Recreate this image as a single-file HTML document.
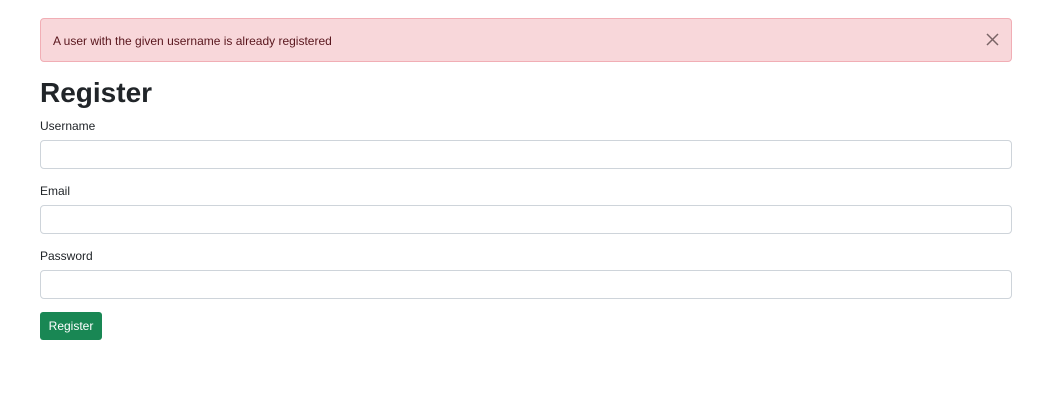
<!DOCTYPE html>
<html><head><meta charset="utf-8"><style>
body{margin:0;width:1045px;height:414px;background:#fff;font-family:"Liberation Sans",sans-serif;position:relative;color:#212529}
.alert{position:absolute;left:40px;top:18px;width:970px;height:42px;background:#f8d7da;border:1px solid #f1aeb5;border-radius:4px;box-sizing:content-box}
.alert span{position:absolute;left:12px;top:15px;font-size:12px;color:#58151c}
.x{position:absolute;right:12px;top:14px}
h1{position:absolute;left:40px;top:77px;margin:0;font-size:28px;font-weight:bold;color:#212529}
label{position:absolute;left:40px;font-size:12px}
.inp{position:absolute;left:40px;width:970px;height:27px;border:1px solid #ced4da;border-radius:4px;box-sizing:content-box}
.btn{position:absolute;left:40px;top:312px;width:62px;height:28px;background:#198754;border-radius:3px;color:#fff;font-size:12px;text-align:center;line-height:28px}
</style></head><body>
<div class="alert"><span>A user with the given username is already registered</span>
<svg class="x" width="13" height="13" viewBox="0 0 13 13"><path d="M1 1L12 12M12 1L1 12" stroke="#7a6466" stroke-width="1.5"/></svg></div>
<h1>Register</h1>
<label style="top:119px">Username</label><div class="inp" style="top:140px"></div>
<label style="top:184px">Email</label><div class="inp" style="top:205px"></div>
<label style="top:249px">Password</label><div class="inp" style="top:270px"></div>
<div class="btn">Register</div>
</body></html>
